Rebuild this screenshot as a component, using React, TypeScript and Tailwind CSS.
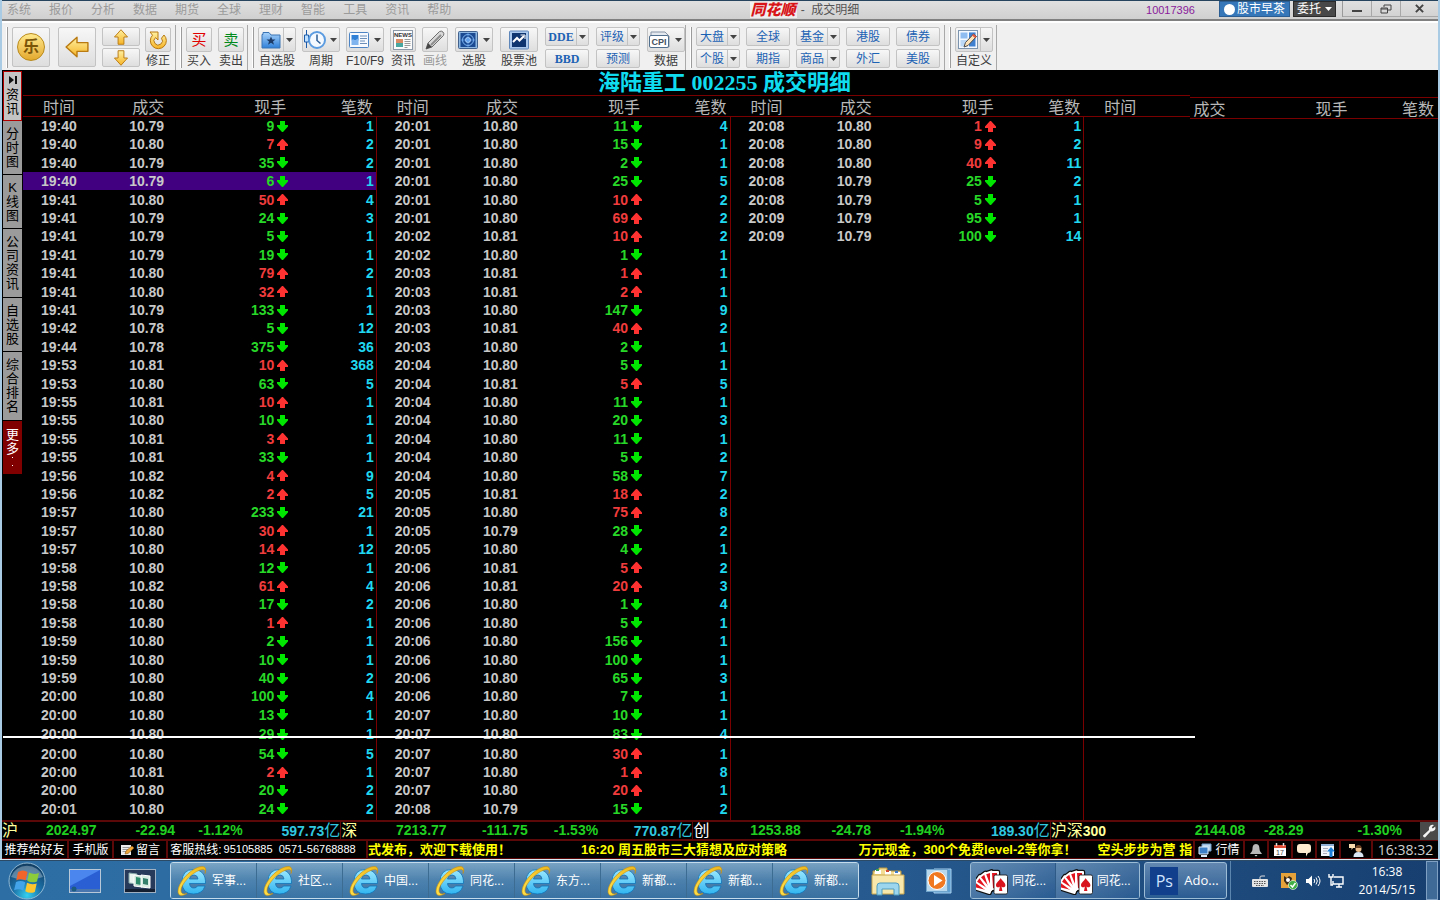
import React from 'react';
import clsx from 'clsx';

type Dir = 'u' | 'd';

interface Trade {
  time: string;
  price: string;
  volume: string;
  dir: Dir;
  count: string;
}

const parseTrades = (raw: string): Trade[] =>
  raw
    .trim()
    .split('\n')
    .map(line => {
      const [time, price, vol, count] = line.trim().split(' ');
      return { time, price, volume: vol.slice(0, -1), dir: vol.slice(-1) as Dir, count };
    });

const BLOCKS: Trade[][] = [
  parseTrades(`19:40 10.79 9d 1
    19:40 10.80 7u 2
    19:40 10.79 35d 2
    19:40 10.79 6d 1
    19:41 10.80 50u 4
    19:41 10.79 24d 3
    19:41 10.79 5d 1
    19:41 10.79 19d 1
    19:41 10.80 79u 2
    19:41 10.80 32u 1
    19:41 10.79 133d 1
    19:42 10.78 5d 12
    19:44 10.78 375d 36
    19:53 10.81 10u 368
    19:53 10.80 63d 5
    19:55 10.81 10u 1
    19:55 10.80 10d 1
    19:55 10.81 3u 1
    19:55 10.81 33d 1
    19:56 10.82 4u 9
    19:56 10.82 2u 5
    19:57 10.80 233d 21
    19:57 10.80 30u 1
    19:57 10.80 14u 12
    19:58 10.80 12d 1
    19:58 10.82 61u 4
    19:58 10.80 17d 2
    19:58 10.80 1u 1
    19:59 10.80 2d 1
    19:59 10.80 10d 1
    19:59 10.80 40d 2
    20:00 10.80 100d 4
    20:00 10.80 13d 1
    20:00 10.80 29d 1
    20:00 10.80 54d 5
    20:00 10.81 2u 1
    20:00 10.80 20d 2
    20:01 10.80 24d 2`),
  parseTrades(`20:01 10.80 11d 4
    20:01 10.80 15d 1
    20:01 10.80 2d 1
    20:01 10.80 25d 5
    20:01 10.80 10u 2
    20:01 10.80 69u 2
    20:02 10.81 10u 2
    20:02 10.80 1d 1
    20:03 10.81 1u 1
    20:03 10.81 2u 1
    20:03 10.80 147d 9
    20:03 10.81 40u 2
    20:03 10.80 2d 1
    20:04 10.80 5d 1
    20:04 10.81 5u 5
    20:04 10.80 11d 1
    20:04 10.80 20d 3
    20:04 10.80 11d 1
    20:04 10.80 5d 2
    20:04 10.80 58d 7
    20:05 10.81 18u 2
    20:05 10.80 75u 8
    20:05 10.79 28d 2
    20:05 10.80 4d 1
    20:06 10.81 5u 2
    20:06 10.81 20u 3
    20:06 10.80 1d 4
    20:06 10.80 5d 1
    20:06 10.80 156d 1
    20:06 10.80 100d 1
    20:06 10.80 65d 3
    20:06 10.80 7d 1
    20:07 10.80 10d 1
    20:07 10.80 83d 4
    20:07 10.80 30u 1
    20:07 10.80 1u 8
    20:07 10.80 20u 1
    20:08 10.79 15d 2`),
  parseTrades(`20:08 10.80 1u 1
    20:08 10.80 9u 2
    20:08 10.80 40u 11
    20:08 10.79 25d 2
    20:08 10.79 5d 1
    20:09 10.79 95d 1
    20:09 10.79 100d 14`),
  [],
];

const MENUS = ['系统', '报价', '分析', '数据', '期货', '全球', '理财', '智能', '工具', '资讯', '帮助'];

const SIDE_TABS = [
  { label: '分时图', cls: 'h-[54px]' },
  { label: 'K线图', cls: 'h-[54px]' },
  { label: '公司资讯', cls: 'h-[69px]' },
  { label: '自选股', cls: 'h-[54px]' },
  { label: '综合排名', cls: 'h-[69px]' },
];

const INDEXES = [
  { name: '沪', price: '2024.97', change: '-22.94', pct: '-1.12%', amount: '597.73', nameCls: 'text-[#ffff9c]', cols: 'grid-cols-[94fr_78fr_67fr_97fr]' },
  { name: '深', price: '7213.77', change: '-111.75', pct: '-1.53%', amount: '770.87', nameCls: 'text-[#ffff9c]', cols: 'grid-cols-[105fr_81fr_70fr_94fr]' },
  { name: '创', price: '1253.88', change: '-24.78', pct: '-1.94%', amount: '189.30', nameCls: 'text-white', cols: 'grid-cols-[107fr_70fr_73fr_105fr]' },
];

const IE_TASKS = ['军事...', '社区...', '中国...', '同花...', '东方...', '新都...', '新都...', '新都...'];

/* ---------- small drawings ---------- */

const TickArrow = ({ dir }: { dir: Dir }) => (
  <svg viewBox="0 0 11 11" className="h-[11px] w-[11px] shrink-0" fill={dir === 'u' ? '#ff3232' : '#00e600'}>
    {dir === 'u' ? (
      <path d="M5 0h1l5 5.500V7H8v4H3V7H0V5.500z" />
    ) : (
      <path d="M3 0h5v4h3v1.500L6 11H5L0 5.500V4h3z" />
    )}
  </svg>
);

const Caret = ({ className = 'text-[#444]' }: { className?: string }) => (
  <svg viewBox="0 0 7 4" className={clsx('h-1 w-[7px] shrink-0', className)} fill="currentColor">
    <path d="M0 0h7L3.500 4z" />
  </svg>
);

const GoldDefs = () => (
  <svg className="absolute h-0 w-0">
    <defs>
      <linearGradient id="gold" x1="0" y1="0" x2="0" y2="1">
        <stop offset="0" stopColor="#fff0a0" />
        <stop offset="1" stopColor="#f6b426" />
      </linearGradient>
      <linearGradient id="sky" x1="0" y1="0" x2="0" y2="1">
        <stop offset="0" stopColor="#a9d3fb" />
        <stop offset="1" stopColor="#2f80d8" />
      </linearGradient>
      <linearGradient id="ie" x1="0" y1="0" x2="0" y2="1">
        <stop offset="0" stopColor="#9be8ff" />
        <stop offset="1" stopColor="#30b4f0" />
      </linearGradient>
      <linearGradient id="ieRing" x1="0" y1="1" x2="1" y2="0">
        <stop offset="0" stopColor="#ffe04a" />
        <stop offset="1" stopColor="#f0b91c" />
      </linearGradient>
      <radialGradient id="orb" cx=".5" cy=".9" r=".9">
        <stop offset="0" stopColor="#35d0f0" />
        <stop offset=".45" stopColor="#1b6fa6" />
        <stop offset="1" stopColor="#123a5e" />
      </radialGradient>
    </defs>
  </svg>
);

const ARROW_PATHS = {
  left: 'M1 11 11 2v5h10v8H11v5z',
  up: 'M11 1 20 11h-5v10H7V11H2z',
  down: 'M11 21 2 11h5V1h8v10h5z',
};

const GoldArrow = ({ to, className }: { to: keyof typeof ARROW_PATHS; className: string }) => (
  <svg viewBox="0 0 22 22" className={className}>
    <path d={ARROW_PATHS[to]} fill="url(#gold)" stroke="#b97a12" strokeWidth="1.300" strokeLinejoin="round" />
  </svg>
);

const RefreshIcon = () => (
  <svg viewBox="0 0 20 20" className="h-5 w-5">
    <path d="M2 2h8v8L7.500 7.600a4.200 4.200 0 1 0 6 .6L16 5a8 8 0 1 1-11.500.2z" fill="url(#gold)" stroke="#b97a12" />
  </svg>
);

const FavIcon = () => (
  <svg viewBox="0 0 20 18" className="h-[18px] w-5">
    <path d="M1 3.500h1v-2h6l2 2.500h9V17H1z" fill="url(#sky)" stroke="#3b75b5" />
    <path d="m10 5.500 1.300 3h3.200l-2.500 2 1 3.200-3-1.900-3 1.900 1-3.200-2.500-2h3.200z" fill="#1d3b66" />
  </svg>
);

const PeriodIcon = () => (
  <svg viewBox="0 0 22 20" className="h-5 w-[22px]">
    <path d="M2.500 0v18" stroke="#1a5aa8" />
    <path d="M.5 5h4v7h-4z" fill="#bfe0ff" stroke="#1a5aa8" />
    <circle cx="13" cy="10" r="8" fill="#f4f9ff" stroke="#5b9be0" strokeWidth="2" />
    <path d="M13 4.500V10.500l3.500 3" fill="none" stroke="#2d5d96" strokeWidth="1.500" />
  </svg>
);

const PanelIcon = () => (
  <svg viewBox="0 0 20 18" className="h-[18px] w-5">
    <rect x=".5" y="1.500" width="19" height="15" rx="1" fill="#f7fbff" stroke="#4c84c4" />
    <path d="M2.500 4h7v5.500h-7z" fill="#2f7fd6" />
    <path d="M2.500 9.500 4 8l2 1.500L9.500 7v7h-7z" fill="#7fb4ee" />
    <path d="M11 5h7M11 7.500h7M11 10h5M11 12.500h7" stroke="#6b8fb8" />
  </svg>
);

const NewsIcon = () => (
  <svg viewBox="0 0 22 22" className="h-[22px] w-[22px]">
    <rect x="1.500" y="1.500" width="19" height="19" fill="#fbfbfb" stroke="#8b98a8" />
    <text x="11" y="8" fontSize="6" fontWeight="700" textAnchor="middle" fill="#333" fontFamily="Liberation Sans, sans-serif">NEWS</text>
    <path d="M4 10h7v4H4z" fill="#d98c64" />
    <path d="M4 14h7v4H4z" fill="#48a7a0" />
    <path d="M12.500 10.500h6M12.500 12.500h6M12.500 14.500h6M12.500 16.500h6M12.500 18.500h3" stroke="#9a9a9a" />
  </svg>
);

const PenIcon = () => (
  <svg viewBox="0 0 20 20" className="h-5 w-5">
    <path d="m1 19 2-6L14.500 1.500q2-1 3.500.5t.5 3.500L7 17z" fill="#d8d8d8" stroke="#6e6e6e" />
    <path d="m6 15 10-10" stroke="#8d8d8d" strokeWidth="2" />
    <path d="m1 19 2-6 4 4z" fill="#444" />
  </svg>
);

const RadarIcon = () => (
  <svg viewBox="0 0 20 18" className="h-[18px] w-5">
    <rect x=".5" y=".5" width="19" height="17" rx="1" fill="#8eb8e2" stroke="#42618c" />
    <rect x="2.500" y="2" width="15" height="14" fill="#1b4a92" />
    <circle cx="10" cy="9" r="5.500" fill="none" stroke="#7db6f4" />
    <circle cx="10" cy="9" r="2.500" fill="#5d9cec" stroke="#b7dbff" />
    <path d="M10 2v14M3 9h14" stroke="#6aa5ea" strokeWidth=".7" />
  </svg>
);

const PoolIcon = () => (
  <svg viewBox="0 0 20 20" className="h-5 w-5">
    <rect x=".5" y="1" width="19" height="18" rx="1" fill="#a9c8ec" stroke="#5e86b8" />
    <rect x="3" y="3" width="14" height="14" fill="#0f3570" />
    <path d="m4 12 4-4 2.500 2.500L15 6" fill="none" stroke="#fff" strokeWidth="2" />
    <path d="M11.500 5H16v4" fill="none" stroke="#fff" />
  </svg>
);

const CpiIcon = () => (
  <svg viewBox="0 0 22 20" className="h-5 w-[22px]">
    <path d="M2 2h14l4 4v11H2z" fill="#e4e9ef" stroke="#8593a4" />
    <rect x=".5" y="5.500" width="19" height="12" rx="1.500" fill="#fff" stroke="#51708f" />
    <text x="10" y="15" fontSize="9" fontWeight="700" textAnchor="middle" fill="#44515e" fontFamily="Liberation Sans, sans-serif">CPI</text>
  </svg>
);

const CustomIcon = () => (
  <svg viewBox="0 0 20 20" className="h-5 w-5">
    <rect x=".5" y=".5" width="19" height="18" fill="#f4f9ff" stroke="#7d94ae" />
    <path d="M2.500 2.500h7v6h-7z" fill="#8fbcf0" />
    <path d="M11 2.500h6.500v6H11zM2.500 10h7v6.500h-7z" fill="#bcd8f7" />
    <path d="M11 2.500h6.500v14H11z" fill="#3f80d0" />
    <path d="m6 17 1.500-4.500L15.500 4l3 2.500L10 15.500z" fill="#ffe3b8" stroke="#4b4b4b" />
    <path d="m14 5.500 3 2.500 1.500-1.500-3-2.500z" fill="#e5573f" />
  </svg>
);

const IeIcon = () => (
  <svg viewBox="0 0 32 32" className="h-8 w-8 shrink-0">
    <path
      d="M17.500 4.500C25.500 4.500 30 10 29.500 18.500H13.500Q14 23 18 23q2.500 0 3.500-2h7.500Q26.500 29 17.500 29 6 29 6 17 6 4.500 17.500 4.500zM13.500 14H22Q21.500 10 18 10q-4 0-4.500 4z"
      fill="url(#ie)"
      stroke="#1174b8"
      strokeWidth=".8"
      fillRule="evenodd"
    />
    <path d="M11 28.500C6 31.500 2 31 2 26.500 2 18 13 5 23 2c6-1.700 8 1 6 6.500 1-3.500-1-5-5-3.500C15 8 5 19.500 5 25.500c0 3 2 4 6 3z" fill="url(#ieRing)" stroke="#c48d10" strokeWidth=".6" />
  </svg>
);

const FAN = [
  'rotate(-72 17 25)',
  'rotate(-54 17 25)',
  'rotate(-36 17 25)',
  'rotate(-18 17 25)',
  'rotate(0 17 25)',
];

const CardsIcon = () => (
  <svg viewBox="0 0 32 28" className="h-7 w-8 shrink-0">
    {FAN.map(t => (
      <rect key={t} x="14" y="4" width="9" height="19" rx="1" transform={t} fill="#111" stroke="#111" strokeWidth="2.500" />
    ))}
    {FAN.map(t => (
      <g key={t} transform={t}>
        <rect x="14" y="4" width="9" height="19" rx="1" fill="#fff" />
        <path d="M16 6h5v15h-4z" fill="#e4141e" />
      </g>
    ))}
    <rect x="18" y="8" width="13.500" height="19" rx="1.500" fill="#fff" stroke="#111" strokeWidth=".8" />
    <path d="M24.700 11c-1 2.500-4.700 4.500-4.700 7.300 0 2.200 2.500 2.700 3.900 1.200L23 24h3.400l-.9-4.500c1.400 1.500 3.900 1 3.900-1.200 0-2.800-3.700-4.800-4.700-7.300z" fill="#d8141e" />
  </svg>
);

const StartOrb = () => (
  <svg viewBox="0 0 38 38" className="h-[38px] w-[38px]">
    <circle cx="19" cy="19" r="18" fill="url(#orb)" stroke="#8fb7d2" />
    <path d="M3 15a17 17 0 0 1 32 0q-16 6-32 0z" fill="#fff" opacity=".3" />
    <path d="M10 10q5-3 9.500 0l-1.900 8.500q-4.500-2.500-9.300-.2z" fill="#f2652a" />
    <path d="M21 10.500q4.500 2.500 10 .5l-2 8.500q-5 2-9.700-.6z" fill="#8ccb3a" />
    <path d="M8 20q4.800-2 9.200.3l-1.900 8.400q-4.500-2.700-9.200-.4z" fill="#43a4ea" />
    <path d="M19 20.800q4.700 2.500 9.700.7L26.800 30q-4.800 2-9.500-.7z" fill="#fdc62e" />
  </svg>
);

const DesktopIcon = () => (
  <svg viewBox="0 0 32 24" className="h-6 w-8">
    <rect x=".5" y=".5" width="31" height="23" fill="#2a5fd4" stroke="#b9c8d8" />
    <path d="M1 1h30L1 17z" fill="#4a86ee" />
    <path d="M1 20h30v3H1z" fill="#4a76b0" />
    <circle cx="5" cy="20" r="2.500" fill="#1c5c80" />
  </svg>
);

const FlipIcon = () => (
  <svg viewBox="0 0 32 24" className="h-6 w-8">
    <rect x=".5" y=".5" width="31" height="23" fill="#273a5a" stroke="#9fb0c2" />
    <path d="m5 4 8 1v10l-8-1z" fill="#e8f2ee" stroke="#8aa" />
    <path d="m10 6 8 1v11l-8-1z" fill="#c6e0d4" stroke="#fff" />
    <path d="m12 8 5 1v7l-5-1z" fill="#2b8b6a" />
    <path d="m17 6 9 1v12l-9-1z" fill="#d9ece4" stroke="#fff" />
    <path d="m19 9 5 1v6l-5-1z" fill="#35806c" />
    <path d="M1 20h30v3H1z" fill="#131e30" />
  </svg>
);

const FolderIcon = () => (
  <svg viewBox="0 0 34 30" className="h-[30px] w-[34px]">
    <path d="M2 5h6V2h8v3h14v22H2z" fill="#f3dd94" stroke="#b8963f" />
    <path d="M4 4h6v4H4zM14 5h6v4h-6zM23 6h6v4h-6z" fill="#fff" />
    <path d="M5 3h3v2H5z" fill="#3aa04a" />
    <path d="M15 4h3v2h-3z" fill="#d04830" />
    <path d="M24 5h3v2h-3z" fill="#3a78c8" />
    <path d="M1 9h32v19H1z" fill="#f8e8ac" stroke="#c9a64d" />
    <path d="M6 29v-9q0-3 3-3h16q3 0 3 3v9h-5v-6H11v6z" fill="#9bd6ee" stroke="#4e9cc0" />
  </svg>
);

const PlayerIcon = () => (
  <svg viewBox="0 0 28 26" className="h-[26px] w-7">
    <path d="M8 1h17v24H8z" fill="#5f9fd2" stroke="#a8d0ee" />
    <rect x=".5" y="1.500" width="21" height="22" fill="#b8d8ee" stroke="#6fa5cc" />
    <circle cx="11" cy="12.500" r="9" fill="#f07820" stroke="#fff" />
    <path d="m8 7 8.500 5.500L8 18z" fill="#fff" />
  </svg>
);

/* ---------- toolbar ---------- */

const btnFace = 'rounded-[2px] border border-[#c3c3c3] bg-gradient-to-b from-[#f7f7f7] to-[#dedede]';

const ToolGroup = ({ children, className }: { children: React.ReactNode; className?: string }) => (
  <div className="flex h-full items-start border-r border-[#a9a9a9] pt-[2px]">
    <span className="mr-1 ml-1 h-[41px] w-[2px] shrink-0 border-r border-[#9c9c9c] bg-white" />
    <div className={clsx('flex items-start', className)}>{children}</div>
  </div>
);

interface IconToolProps {
  label: string;
  icon: React.ReactNode;
  menu?: boolean;
  wide?: boolean;
  split?: boolean;
  muted?: boolean;
}

const IconTool = ({ label, icon, menu, wide, split, muted }: IconToolProps) => (
  <button className={clsx('flex shrink-0 flex-col items-center', menu || wide ? 'w-[38px]' : 'w-[26px]')}>
    <span className={clsx('flex h-[25px] w-full items-center justify-center', btnFace)}>
      <span className="flex flex-1 items-center justify-center">{icon}</span>
      {menu && (
        <span className={clsx('flex h-full w-3 items-center justify-center', split && 'border-l border-[#c3c3c3]')}>
          <Caret />
        </span>
      )}
    </span>
    <span className={clsx('text-xs leading-[18px] whitespace-nowrap', muted ? 'text-[#9a9a9a]' : 'text-[#3c3c3c]')}>{label}</span>
  </button>
);

const TextTool = ({ label, menu, serif }: { label: string; menu?: boolean; serif?: boolean }) => (
  <button className={clsx('flex h-[19px] w-11 items-center text-[#1c62b4]', btnFace)}>
    <span className={clsx('flex-1 text-center leading-none', serif ? "font-['Liberation_Serif'] text-xs font-bold" : 'text-xs')}>{label}</span>
    {menu && (
      <span className="flex h-full w-3 items-center justify-center border-l border-[#c3c3c3]">
        <Caret />
      </span>
    )}
  </button>
);

const TextPair = ({ top, bottom }: { top: React.ReactNode; bottom: React.ReactNode }) => (
  <div className="flex flex-col gap-[3px]">
    {top}
    {bottom}
  </div>
);

const Toolbar = () => (
  <div className="flex h-[47px] items-start bg-[#f0f0f0] pt-[2px]">
    <ToolGroup className="pr-1">
      <button className={clsx('flex h-10 w-[38px] items-center justify-center', btnFace)}>
        <span className="flex h-7 w-7 items-center justify-center rounded-full border border-[#b98a1c] bg-gradient-to-b from-[#ffe98a] to-[#e3a92a] text-base font-bold leading-none text-[#7a5408]">
          乐
        </span>
      </button>
      <button aria-label="后退" className={clsx('ml-2 flex h-10 w-[38px] items-center justify-center', btnFace)}>
        <GoldArrow to="left" className="h-6 w-6" />
      </button>
      <div className="mr-[5px] ml-[6px] flex flex-col gap-[2px]">
        <button aria-label="上一个" className={clsx('flex h-[19px] w-[38px] items-center justify-center', btnFace)}>
          <GoldArrow to="up" className="h-4 w-4" />
        </button>
        <button aria-label="下一个" className={clsx('flex h-[19px] w-[38px] items-center justify-center', btnFace)}>
          <GoldArrow to="down" className="h-4 w-4" />
        </button>
      </div>
      <IconTool label="修正" icon={<RefreshIcon />} />
    </ToolGroup>
    <ToolGroup className="gap-[6px] pr-[3px]">
      <IconTool label="买入" icon={<span className="text-[15px] leading-none text-[#e00000]">买</span>} />
      <IconTool label="卖出" icon={<span className="text-[15px] leading-none text-[#008a1c]">卖</span>} />
    </ToolGroup>
    <ToolGroup>
      <div className="mr-[7px] flex gap-[6px]">
        <IconTool label="自选股" icon={<FavIcon />} menu split />
        <IconTool label="周期" icon={<PeriodIcon />} menu />
        <IconTool label="F10/F9" icon={<PanelIcon />} menu />
        <IconTool label="资讯" icon={<NewsIcon />} />
        <IconTool label="画线" icon={<PenIcon />} muted />
      </div>
      <div className="flex gap-[7px]">
        <IconTool label="选股" icon={<RadarIcon />} menu />
        <IconTool label="股票池" icon={<PoolIcon />} wide />
        <TextPair top={<TextTool label="DDE" menu serif />} bottom={<TextTool label="BBD" serif />} />
        <TextPair top={<TextTool label="评级" menu />} bottom={<TextTool label="预测" />} />
        <IconTool label="数据" icon={<CpiIcon />} menu />
      </div>
    </ToolGroup>
    <ToolGroup className="gap-[6px] pr-1">
      <TextPair top={<TextTool label="大盘" menu />} bottom={<TextTool label="个股" menu />} />
      <TextPair top={<TextTool label="全球" />} bottom={<TextTool label="期指" />} />
      <TextPair top={<TextTool label="基金" menu />} bottom={<TextTool label="商品" menu />} />
      <TextPair top={<TextTool label="港股" />} bottom={<TextTool label="外汇" />} />
      <TextPair top={<TextTool label="债券" />} bottom={<TextTool label="美股" />} />
    </ToolGroup>
    <ToolGroup className="pr-[3px]">
      <IconTool label="自定义" icon={<CustomIcon />} menu split />
    </ToolGroup>
  </div>
);

const TitleBar = () => (
  <header className="flex h-[23px] items-start border-t border-b-2 border-t-[#27445e] border-b-white bg-[#d6d6d6]">
    <div className="flex h-5 w-full items-center border-b-2 border-[#808080] bg-gradient-to-b from-[#e0e0e0] to-[#d0d0d0]">
      <nav className="flex flex-[743] gap-[18px] pl-[5px]">
        {MENUS.map(m => (
          <button key={m} className="text-xs leading-none text-[#9b9b9b]">{m}</button>
        ))}
      </nav>
      <div className="flex items-center gap-1 text-xs text-[#555]">
        <span className="bg-white/60 px-px text-[15px] font-black italic leading-4 text-[#d81418]">同花顺</span>
        <span>-&nbsp; 成交明细</span>
      </div>
      <div className="flex h-full flex-[579] items-start justify-end">
        <span className="mr-6 text-[11px] leading-[18px] text-[#8a1a9a]">10017396</span>
        <button className="flex h-4 items-center gap-[2px] border border-[#2b5d92] bg-[#3577b8] px-1 text-xs leading-none text-white">
          <span className="h-[11px] w-[11px] rounded-full bg-white" />
          股市早茶
        </button>
        <button className="ml-[3px] flex h-4 items-center gap-1 border border-[#2a2a2a] bg-[#484848] px-[3px] text-xs leading-none text-white">
          委托
          <Caret className="text-white" />
        </button>
        <div className="ml-[6px] flex h-4 border-l border-[#9a9a9a] text-[#444]">
          <button aria-label="最小化" className="flex w-[29px] items-center justify-center border-r border-b border-[#a8a8a8]">
            <svg viewBox="0 0 10 10" className="h-[10px] w-[10px]"><path d="M0 6h10v2H0z" fill="currentColor" /></svg>
          </button>
          <button aria-label="还原" className="flex w-[29px] items-center justify-center border-r border-b border-[#a8a8a8]">
            <svg viewBox="0 0 12 10" className="h-[10px] w-3" fill="none" stroke="currentColor"><path d="M4 3V1h7v5H8M1 4h6.500v5H1zM1 5h6" /></svg>
          </button>
          <button aria-label="关闭" className="flex w-[37px] items-center justify-center border-b border-[#a8a8a8]">
            <svg viewBox="0 0 10 10" className="h-[9px] w-[9px]" fill="none" stroke="currentColor" strokeWidth="2.200"><path d="m1 1 8 8M9 1 1 9" /></svg>
          </button>
        </div>
      </div>
    </div>
  </header>
);

/* ---------- trade detail ---------- */

const SideTabs = () => (
  <nav className="flex w-[21px] shrink-0 flex-col pt-px pr-px pl-px text-[13px] leading-[14px] text-black">
    <button className="flex h-[50px] flex-col items-center border border-[#b00000] bg-[#c4c4c4] pt-1">
      <svg viewBox="0 0 8 8" className="mb-1 h-2 w-2"><path d="M0 0l5 4-5 4zM6 0h2v8H6z" fill="#111" /></svg>
      <span className="w-[13px]">资讯</span>
    </button>
    {SIDE_TABS.map(t => (
      <button key={t.label} className={clsx('flex items-center justify-center border-b border-black bg-[#9b9b9b]', t.cls)}>
        <span className="w-[13px] text-center">{t.label}</span>
      </button>
    ))}
    <button className="flex h-[53px] flex-col items-center bg-[#800000] pt-[7px] text-white">
      <span className="w-[13px]">更多</span>
      <svg viewBox="0 0 2 12" className="h-3 w-[2px]" fill="#fff"><path d="M0 1h1v1H0zM0 9h1v1H0z" /></svg>
    </button>
  </nav>
);

const HEADS = [
  { label: '时间', cls: 'text-left pl-5' },
  { label: '成交', cls: 'text-left pl-[3px]' },
  { label: '现手', cls: 'text-right pr-[2px]' },
  { label: '笔数', cls: 'text-right pr-1' },
];

// 5 rows take 92px; the row under the marker line is a little taller
const rowHeight = (i: number) => {
  if (i === 33) return 'h-5';
  return i % 5 === 2 || i % 5 === 4 ? 'h-[19px]' : 'h-[18px]';
};

const TradeBlock = ({ trades, selected, last }: { trades: Trade[]; selected?: number; last: boolean }) => (
  <section className="relative min-w-0 flex-1">
    <table className="w-full table-fixed border-collapse font-['Liberation_Sans'] text-sm leading-none font-bold">
      <colgroup>
        <col className="w-[30%]" />
        <col className="w-[20%]" />
        <col className="w-[25%]" />
        <col className="w-[25%]" />
      </colgroup>
      <thead>
        <tr className="align-top">
          {HEADS.map((h, i) => (
            <th key={h.label} className={clsx("p-0 font-['Noto_Sans_CJK_SC'] text-base font-normal text-[#b8b8b8]", last && i > 0 && 'pt-[2px]')}>
              <div className={clsx('h-[22px] border-y border-[#7a0000] leading-5', h.cls)}>{h.label}</div>
            </th>
          ))}
        </tr>
      </thead>
      <tbody>
        {trades.map((t, i) => (
          <tr key={i} className={clsx(rowHeight(i), i === selected && 'bg-[#400080]')}>
            <td className="p-0 pl-[18px] text-[#c8c8c8]">{t.time}</td>
            <td className="p-0 text-[#c8c8c8]">{t.price}</td>
            <td className="p-0">
              <span className={clsx('flex items-center justify-end gap-[3px]', t.dir === 'u' ? 'text-[#f03c3c]' : 'text-[#28d828]')}>
                {t.volume}
                <TickArrow dir={t.dir} />
              </span>
            </td>
            <td className="p-0 pr-[3px] text-right text-[#20d8f0]">{t.count}</td>
          </tr>
        ))}
      </tbody>
    </table>
    {!last && <span className="absolute top-[22px] right-0 bottom-0 w-px bg-[#7a0000]" />}
  </section>
);

const TradeDetail = () => (
  <main className="relative flex flex-1 bg-black">
    <SideTabs />
    <div className="flex min-w-0 flex-1 flex-col">
      <h1 className="h-[25px] pr-3 text-center font-['Liberation_Serif','Noto_Sans_CJK_SC',serif] text-[22px] leading-[25px] font-bold text-[#10dcf0]">
        海陆重工 002255 成交明细
      </h1>
      <div className="flex flex-1">
        {BLOCKS.map((b, i) => (
          <TradeBlock key={i} trades={b} selected={i === 0 ? 3 : undefined} last={i === BLOCKS.length - 1} />
        ))}
      </div>
    </div>
    {/* marker line across the list */}
    <span className="absolute top-[666px] left-px h-[2px] w-[83%] bg-white" />
  </main>
);

/* ---------- bottom bars ---------- */

const IndexBar = () => (
  <div className="grid h-[21px] grid-cols-[339fr_352fr_357fr_369fr_18px] border-t-2 border-b-2 border-[#5c0808] bg-black font-['Liberation_Sans','Noto_Sans_CJK_SC',sans-serif] text-sm leading-[17px] font-bold text-[#20d020]">
    {INDEXES.map(x => (
      <div key={x.name} className={clsx('grid border-r border-[#5c0808] text-right', x.cols)}>
        <span className="flex justify-between">
          <span className={clsx('text-base leading-[17px] font-normal', x.nameCls)}>{x.name}</span>
          {x.price}
        </span>
        <span>{x.change}</span>
        <span>{x.pct}</span>
        <span className="text-[#30c8e0]">{x.amount}<span className="text-base leading-[17px] font-normal">亿</span></span>
      </div>
    ))}
    <div className="grid grid-cols-[194fr_58fr_98fr_18fr] text-right">
      <span className="flex justify-between">
        <span className="text-[#ffff9c]"><span className="text-base leading-[17px] font-normal">沪深</span>300</span>
        2144.08
      </span>
      <span>-28.29</span>
      <span>-1.30%</span>
    </div>
    <button aria-label="设置" className="flex items-center justify-center bg-[#4a4a4a]">
      <svg viewBox="0 0 14 14" className="h-[14px] w-[14px]">
        <path d="M1 11.500 7 6q-.8-3 1.300-4.500Q10 .3 12 1L9.800 3.200l1 1.200L13.300 2.500q.6 2.300-.8 3.800Q11 7.800 8.700 7.300L3 13.500Q1 13.500 1 11.500z" fill="#f4f4f4" />
      </svg>
    </button>
  </div>
);

const cell = 'flex h-full shrink-0 items-center justify-center border-r-2 border-[#5c0808]';

const NewsBar = () => (
  <div className="flex h-[18px] items-center border-b border-[#5c0808] bg-black text-xs leading-none whitespace-nowrap text-white">
    <a href="#share" className={clsx(cell, 'w-[67px]')}>推荐给好友</a>
    <a href="#mobile" className={clsx(cell, 'w-[45px]')}>手机版</a>
    <button className={clsx(cell, 'w-[54px] gap-[2px]')}>
      <svg viewBox="0 0 14 12" className="h-3 w-[14px]">
        <path d="M1 1h10v10H1z" fill="#eee" />
        <path d="M2.500 3.500h7M2.500 5.500h6M2.500 7.500h5" stroke="#999" />
        <path d="m5 10 1-3 6-5 2 2-6 5.500z" fill="#f3a83a" stroke="#8a5510" strokeWidth=".6" />
      </svg>
      留言
    </button>
    <span className={clsx(cell, 'w-[200px] gap-[2px] pr-2')}>客服热线:<span className="text-[11px]">95105885&nbsp; 0571-56768888</span></span>
    <div className="flex min-w-0 flex-1 overflow-hidden text-[13px] leading-4 font-bold text-[#ffff00]">
      <span className="flex-[212]">式发布，欢迎下载使用！</span>
      <span className="flex-[276]">16:20 周五股市三大猜想及应对策略</span>
      <span className="flex-[238]">万元现金，300个免费level-2等你拿！</span>
      <span className="flex-[95]">空头步步为营 指</span>
    </div>
    <button className={clsx(cell, 'w-[52px] gap-[3px] border-l-2')}>
      <svg viewBox="0 0 14 14" className="h-[14px] w-[14px]">
        <path d="M4 1h9v7H4z" fill="#bcd6ee" stroke="#6f9cc8" />
        <path d="M1 4h9v7H1z" fill="#3d7fc6" stroke="#dcecfa" />
        <path d="M3 13h6" stroke="#dcecfa" strokeWidth="2" />
      </svg>
      行情
    </button>
    <button aria-label="提醒" className={clsx(cell, 'w-6')}>
      <svg viewBox="0 0 14 14" className="h-[14px] w-[14px]">
        <path d="M7 1c3 0 3.500 3 3.500 5S12 9.500 13 11H1c1-1.500 2.500-3 2.500-5S4 1 7 1z" fill="#b8b8b8" />
        <path d="M5.500 12h3L7 13.500z" fill="#ddd" />
      </svg>
    </button>
    <button aria-label="日历" className={clsx(cell, 'w-6')}>
      <svg viewBox="0 0 14 14" className="h-[14px] w-[14px]">
        <path d="M1 2h12v11H1z" fill="#fff" />
        <path d="M1 2h12v3H1z" fill="#e05038" />
        <path d="M3.500 0v3M10.500 0v3" stroke="#ddd" strokeWidth="1.500" />
        <text x="7" y="11.500" fontSize="7" textAnchor="middle" fill="#444" fontFamily="Liberation Sans, sans-serif">17</text>
      </svg>
    </button>
    <button aria-label="消息" className={clsx(cell, 'w-6')}>
      <svg viewBox="0 0 14 14" className="h-[14px] w-[14px]">
        <path d="M3 1h8q3 0 3 3v3q0 3-3 3l-2 3.500V10H3Q0 10 0 7V4q0-3 3-3z" fill="#fdecd0" />
      </svg>
    </button>
    <button aria-label="上传" className={clsx(cell, 'w-6')}>
      <svg viewBox="0 0 14 14" className="h-[14px] w-[14px]">
        <path d="M0 1h13v12H0z" fill="#f2f6fa" />
        <path d="M0 1h13v2H0z" fill="#8fb0d4" />
        <path d="M2 5.500h5M2 8h4M2 10.500h4" stroke="#aab" />
        <path d="m10 4 4 4.500h-2.500V14h-3V8.500H6z" fill="#1d7fd8" />
      </svg>
    </button>
    <button aria-label="客服" className={clsx(cell, 'w-8')}>
      <svg viewBox="0 0 16 14" className="h-[14px] w-4">
        <path d="M1 1h6v4H5L3.500 7V5H1z" fill="#f6dcae" />
        <circle cx="10.500" cy="6" r="3" fill="#e9bb88" />
        <path d="M7.500 5q0-3 3-3t3 3z" fill="#6b4424" />
        <path d="M5.500 14q0-5 5-5t5 5z" fill="#d9e6f4" />
      </svg>
    </button>
    <time className="w-[65px] text-center font-['Open_Sans'] text-sm leading-none font-medium text-[#d0d0d0]">16:38:32</time>
  </div>
);

const taskFace = 'h-full bg-gradient-to-b from-[#8cb2cd]/80 via-[#5a8db5]/70 to-[#3f78a6]/70';

const Taskbar = () => (
  <footer className="flex h-[39px] items-center bg-gradient-to-r from-[#2d6fa5] via-[#2b6298] to-[#173f70] text-xs text-white">
    <button aria-label="开始" className="ml-2"><StartOrb /></button>
    <button aria-label="显示桌面" className="ml-[23px]"><DesktopIcon /></button>
    <button aria-label="切换窗口" className="mr-[14px] ml-[23px]"><FlipIcon /></button>
    <div className="flex h-[37px] min-w-0 flex-[690] rounded-[3px] border border-[#c3dbea]">
      {IE_TASKS.map((t, i) => (
        <button key={i} className={clsx('flex min-w-0 flex-1 items-center gap-1 overflow-hidden border-r border-[#3d6c92] pl-[5px] last:border-r-0', taskFace)}>
          <IeIcon />
          {t}
        </button>
      ))}
    </div>
    <button aria-label="资源管理器" className="ml-3"><FolderIcon /></button>
    <button aria-label="播放器" className="mr-4 ml-[21px]"><PlayerIcon /></button>
    <div className="flex h-[37px] min-w-0 flex-[169] rounded-[3px] border border-[#9cbcd6]">
      {[0, 1].map(i => (
        <button key={i} className="flex h-full min-w-0 flex-1 items-center gap-1 overflow-hidden border-r border-[#2e5a88] bg-gradient-to-br from-[#7fa4c6]/70 to-[#2c5f96]/70 pl-[5px] last:border-r-0">
          <CardsIcon />
          同花...
        </button>
      ))}
    </div>
    <button className="ml-1 flex h-[37px] min-w-0 flex-[76] items-center gap-[6px] overflow-hidden rounded-[3px] border border-[#9cbcd6] bg-gradient-to-b from-[#7397bd]/80 to-[#2f629a]/70 pl-[5px]">
      <span className="flex h-7 w-7 shrink-0 items-center justify-center bg-[#123f8c] font-['Open_Sans'] text-base leading-none text-[#cfe4ff]">Ps</span>
      <span className="font-['Open_Sans'] text-[13px]">Ado...</span>
    </button>
    <div className="ml-[3px] flex h-full items-center gap-[7px] border-l border-[#5d86ae] pl-5">
      <svg viewBox="0 0 18 14" className="h-[14px] w-[18px]">
        <path d="M9 5V3q0-1 2-1h3" fill="none" stroke="#ddd" />
        <rect x="1" y="5" width="16" height="8" rx="1" fill="#e6e6e6" />
        <path d="M3 7.500h12M3 9.500h12M5 11.500h8" stroke="#555" strokeDasharray="1.500 1" />
      </svg>
      <svg viewBox="0 0 18 18" className="ml-1 h-[18px] w-[18px]">
        <path d="M1 1h15v15H1z" fill="#e6a23a" />
        <path d="M4 4l3 2 2-2 3 2-1 4-4 3-3-4z" fill="#3a2a18" />
        <circle cx="8" cy="8" r="2" fill="#fff" />
        <circle cx="13" cy="13" r="4.500" fill="#3faf46" stroke="#fff" strokeWidth=".6" />
        <path d="m10.500 13 2 2 3-4" fill="none" stroke="#fff" strokeWidth="1.500" />
      </svg>
      <svg viewBox="0 0 16 14" className="h-[14px] w-4">
        <path d="M1 5h2.500L7 1.500v11L3.500 9H1z" fill="#fff" />
        <path d="M9 5q1.500 2 0 4M11 3.500q2.700 3.500 0 7M13 2q4 5 0 10" fill="none" stroke="#fff" />
      </svg>
      <svg viewBox="0 0 16 16" className="h-4 w-4" fill="none" stroke="#fff" strokeWidth="1.400">
        <path d="M6 4h9v7H5V8M8 14h6M11 11v3M1 1v3h4V1M3 4v8h2" />
      </svg>
    </div>
    <div className="mr-[6px] ml-[10px] w-[66px] text-center font-['Open_Sans'] text-xs leading-[18px]">
      <div>16:38</div>
      <div>2014/5/15</div>
    </div>
    <button aria-label="桌面" className="mr-[2px] h-full w-3 shrink-0 border border-[#7fa0c2] bg-[#3f6a98]" />
  </footer>
);

const App: React.FC = () => (
  <div className="flex min-h-screen flex-col bg-black font-['Liberation_Sans','Noto_Sans_CJK_SC',sans-serif]">
    <GoldDefs />
    <div className="flex flex-1 flex-col border-x-2 border-[#a9cbe4]">
      <TitleBar />
      <Toolbar />
      <TradeDetail />
      <IndexBar />
      <NewsBar />
    </div>
    <div className="h-[2px] border-t border-[#d8ecf6] bg-[#2a4a66]" />
    <Taskbar />
  </div>
);

export default App;
